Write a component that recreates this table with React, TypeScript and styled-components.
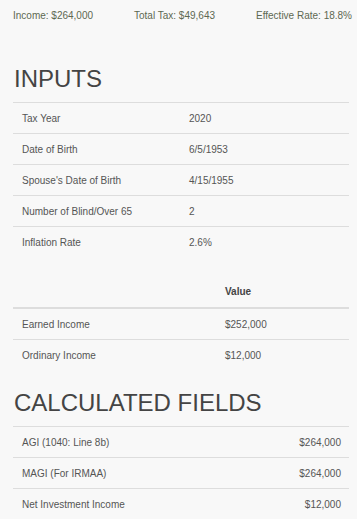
import React from 'react'
import styled, { createGlobalStyle } from 'styled-components'

const GlobalStyle = createGlobalStyle`
  html, body {
    margin: 0;
    padding: 0;
    background: #f8f8f8;
  }
  body {
    font-family: "Liberation Sans", Arial, sans-serif;
    font-size: 10px;
    color: #555;
  }
`

const Page = styled.div`
  width: 357px;
  padding: 0 8px 0 13px;
  box-sizing: border-box;
  overflow: hidden;
`

const Summary = styled.div`
  display: flex;
  justify-content: space-between;
  margin-right: -3px;
  padding-top: 9px;
  line-height: 14px;
  color: #5d6852;
  white-space: nowrap;
`

const Heading = styled.h2`
  margin: 0;
  padding-top: 42px;
  padding-bottom: 9px;
  padding-left: 1px;
  font-size: 24px;
  line-height: 28px;
  font-weight: normal;
  color: #444;
`

const CalcHeading = styled(Heading)`
  padding-top: 19px;
`

const Table = styled.table<{ $gap?: number }>`
  width: 100%;
  table-layout: fixed;
  border-collapse: collapse;
  margin-bottom: ${(p) => p.$gap ?? 0}px;
`

const LabelCol = styled.col<{ $w: number }>`
  width: ${(p) => p.$w}px;
`

const Th = styled.th`
  text-align: left;
  font-weight: bold;
  color: #444;
  padding: 8px 9px;
  line-height: 15px;
  border-bottom: 2px solid #ddd;
`

const Td = styled.td<{ $right?: boolean }>`
  padding: 8px 8px 7px 9px;
  line-height: 15px;
  border-top: 1px solid #ddd;
  text-align: ${(p) => (p.$right ? 'right' : 'left')};
  white-space: nowrap;
`

const inputs = [
  ['Tax Year', '2020'],
  ['Date of Birth', '6/5/1953'],
  ["Spouse's Date of Birth", '4/15/1955'],
  ['Number of Blind/Over 65', '2'],
  ['Inflation Rate', '2.6%'],
]

const incomes = [
  ['Earned Income', '$252,000'],
  ['Ordinary Income', '$12,000'],
]

const calculated = [
  ['AGI (1040: Line 8b)', '$264,000'],
  ['MAGI (For IRMAA)', '$264,000'],
  ['Net Investment Income', '$12,000'],
]

export default function App() {
  return (
    <Page>
      <GlobalStyle />
      <Summary>
        <span>Income: $264,000</span>
        <span>Total Tax: $49,643</span>
        <span>Effective Rate: 18.8%</span>
      </Summary>

      <Heading>INPUTS</Heading>
      <Table $gap={19}>
        <colgroup>
          <LabelCol $w={167} />
          <col />
        </colgroup>
        <tbody>
          {inputs.map(([label, value]) => (
            <tr key={label}>
              <Td>{label}</Td>
              <Td>{value}</Td>
            </tr>
          ))}
        </tbody>
      </Table>

      <Table>
        <colgroup>
          <LabelCol $w={203} />
          <col />
        </colgroup>
        <thead>
          <tr>
            <Th></Th>
            <Th>Value</Th>
          </tr>
        </thead>
        <tbody>
          {incomes.map(([label, value]) => (
            <tr key={label}>
              <Td>{label}</Td>
              <Td>{value}</Td>
            </tr>
          ))}
        </tbody>
      </Table>

      <CalcHeading>CALCULATED FIELDS</CalcHeading>
      <Table>
        <colgroup>
          <LabelCol $w={200} />
          <col />
        </colgroup>
        <tbody>
          {calculated.map(([label, value]) => (
            <tr key={label}>
              <Td>{label}</Td>
              <Td $right>{value}</Td>
            </tr>
          ))}
        </tbody>
      </Table>
    </Page>
  )
}
